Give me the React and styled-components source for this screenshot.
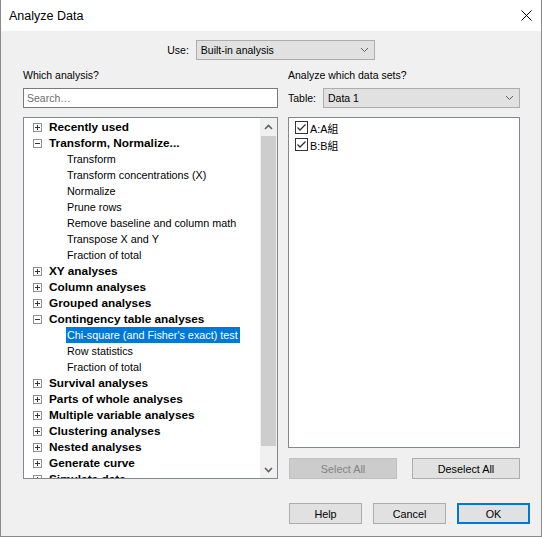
import styled, { createGlobalStyle } from "styled-components"

const GlobalStyle = createGlobalStyle`
    html, body {
        margin: 0;
        background: #ffffff;
    }
    body {
        font-family: "Liberation Sans", Arial, "Noto Sans CJK SC", sans-serif;
        color: #000000;
    }
`

const Window = styled.div`
    width: 542px;
    height: 537px;
    box-sizing: border-box;
    border: 1px solid #8a8a8a;
    border-top: none;
    display: flex;
    flex-direction: column;
    background: #f0f0f0;
`

const TitleBar = styled.div`
    height: 31px;
    flex-shrink: 0;
    background: #ffffff;
    display: flex;
    align-items: center;
    justify-content: space-between;
    padding: 0 9px 0 8px;
`

const Title = styled.span`
    font-size: 12.5px;
    color: #000;
`

const Body = styled.div`
    flex: 1;
    display: flex;
    flex-direction: column;
    padding: 9px 11px 0 22px;
`

const UseRow = styled.div`
    display: flex;
    align-items: center;
    justify-content: center;
    gap: 7px;
    padding-right: 11px;
    font-size: 10.5px;
`

const Combo = styled.div`
    width: ${p => p.width}px;
    height: 20px;
    box-sizing: border-box;
    border: 1px solid #adadad;
    background: #e1e1e1;
    display: flex;
    align-items: center;
    justify-content: space-between;
    padding: 0 5px 0 4px;
    font-size: 10.5px;
`

const Columns = styled.div`
    display: grid;
    grid-template-columns: 255px 232px;
    column-gap: 10px;
    margin-top: 8px;
`

const Column = styled.div`
    display: flex;
    flex-direction: column;
`

const Caption = styled.div`
    height: 14px;
    line-height: 14px;
    font-size: 10.5px;
`

const SearchBox = styled.div`
    margin-top: 6px;
    height: 20px;
    box-sizing: border-box;
    border: 1px solid #7a7a7a;
    background: #fff;
    display: flex;
    align-items: center;
    padding-left: 3px;
    font-size: 10.5px;
    color: #6d6d6d;
`

const TableRow = styled.div`
    margin-top: 6px;
    display: flex;
    align-items: center;
    justify-content: space-between;
    font-size: 10.5px;
`

const Tree = styled.div`
    margin-top: 9px;
    height: 362px;
    box-sizing: border-box;
    border: 1px solid #828790;
    background: #ffffff;
    display: flex;
`

const TreeItems = styled.div`
    flex: 1;
    overflow: hidden;
    padding-top: 1px;
`

const TreeRow = styled.div`
    height: 16px;
    display: flex;
    align-items: center;
    padding-left: ${p => (p.child ? 42 : 9)}px;
    white-space: nowrap;
`

const GroupLabel = styled.span`
    margin-left: 7px;
    font-size: 11.8px;
    font-weight: bold;
`

const LeafLabel = styled.span`
    height: 16px;
    line-height: 16px;
    padding: 0 2px 0 1px;
    font-size: 10.8px;
    background: ${p => (p.selected ? "#0078d7" : "transparent")};
    color: ${p => (p.selected ? "#ffffff" : "#000000")};
`

const ScrollBar = styled.div`
    width: 17px;
    background: #f0f0f0;
    display: flex;
    flex-direction: column;
    align-items: center;
`

const ScrollArrow = styled.div`
    width: 17px;
    height: 17px;
    display: flex;
    align-items: center;
    justify-content: center;
    flex-shrink: 0;
`

const Thumb = styled.div`
    width: 15px;
    height: ${p => p.size}px;
    margin-top: 1px;
    background: #cdcdcd;
`

const ScrollGap = styled.div`
    flex: 1;
`

const DataList = styled.div`
    margin-top: 9px;
    height: 331px;
    box-sizing: border-box;
    border: 1px solid #828790;
    background: #ffffff;
    padding: 1px 6px 0;
`

const CheckRow = styled.div`
    height: 17px;
    display: flex;
    align-items: center;
    gap: 2px;
    font-size: 10.8px;
`

const ListButtons = styled.div`
    margin-top: 10px;
    display: flex;
    justify-content: space-between;
    padding-left: 1px;
`

const Button = styled.div`
    width: ${p => p.width}px;
    height: 21px;
    box-sizing: border-box;
    display: flex;
    align-items: center;
    justify-content: center;
    font-size: 10.8px;
    background: ${p => (p.disabled ? "#cccccc" : "#e1e1e1")};
    border: ${p => (p.primary ? "2px solid #0078d7" : p.disabled ? "1px solid #bfbfbf" : "1px solid #adadad")};
    color: ${p => (p.disabled ? "#838383" : "#000000")};
`

const Footer = styled.div`
    margin-top: 24px;
    display: flex;
    justify-content: flex-end;
    gap: 11px;
`

const Chevron = ({ up, color = "#606060", width = 1 }) => (
    <svg width="9" height="6" viewBox="0 0 9 6">
        <polyline
            points={up ? "1,5 4.5,1.5 8,5" : "1,1 4.5,4.5 8,1"}
            fill="none"
            stroke={color}
            strokeWidth={width}
        />
    </svg>
)

const CloseIcon = () => (
    <svg width="11" height="11" viewBox="0 0 11 11">
        <path d="M0.5 0.5 L10.5 10.5 M10.5 0.5 L0.5 10.5" stroke="#000" strokeWidth="1" />
    </svg>
)

const Expander = ({ open }) => (
    <svg width="9" height="9" viewBox="0 0 9 9">
        <rect x="0.5" y="0.5" width="8" height="8" fill="#fff" stroke="#919191" />
        <path d={open ? "M2 4.5 H7" : "M2 4.5 H7 M4.5 2 V7"} stroke="#333" strokeWidth="1" />
    </svg>
)

const CheckBox = () => (
    <svg width="13" height="13" viewBox="0 0 13 13">
        <rect x="0.5" y="0.5" width="12" height="12" fill="#fff" stroke="#333" />
        <polyline points="2.5,6.5 5,9 10.5,3.5" fill="none" stroke="#333" strokeWidth="1.3" />
    </svg>
)

const analyses = [
    { label: "Recently used" },
    {
        label: "Transform, Normalize...",
        open: true,
        children: [
            "Transform",
            "Transform concentrations (X)",
            "Normalize",
            "Prune rows",
            "Remove baseline and column math",
            "Transpose X and Y",
            "Fraction of total",
        ],
    },
    { label: "XY analyses" },
    { label: "Column analyses" },
    { label: "Grouped analyses" },
    {
        label: "Contingency table analyses",
        open: true,
        children: ["Chi-square (and Fisher's exact) test", "Row statistics", "Fraction of total"],
    },
    { label: "Survival analyses" },
    { label: "Parts of whole analyses" },
    { label: "Multiple variable analyses" },
    { label: "Clustering analyses" },
    { label: "Nested analyses" },
    { label: "Generate curve" },
    { label: "Simulate data" },
]

const selected = "Chi-square (and Fisher's exact) test"

const dataSets = ["A:A組", "B:B組"]

function AnalysisTree() {
    return (
        <Tree>
            <TreeItems>
                {analyses.map(group => (
                    <div key={group.label}>
                        <TreeRow>
                            <Expander open={group.open} />
                            <GroupLabel>{group.label}</GroupLabel>
                        </TreeRow>
                        {group.open &&
                            group.children.map(item => (
                                <TreeRow child key={item}>
                                    <LeafLabel selected={item === selected}>{item}</LeafLabel>
                                </TreeRow>
                            ))}
                    </div>
                ))}
            </TreeItems>
            <ScrollBar>
                <ScrollArrow>
                    <Chevron up width={1.6} />
                </ScrollArrow>
                <Thumb size={310} />
                <ScrollGap />
                <ScrollArrow>
                    <Chevron width={1.6} />
                </ScrollArrow>
            </ScrollBar>
        </Tree>
    )
}

export default function App() {
    return (
        <>
            <GlobalStyle />
            <Window>
                <TitleBar>
                    <Title>Analyze Data</Title>
                    <CloseIcon />
                </TitleBar>
                <Body>
                    <UseRow>
                        <span>Use:</span>
                        <Combo width={179}>
                            <span>Built-in analysis</span>
                            <Chevron />
                        </Combo>
                    </UseRow>
                    <Columns>
                        <Column>
                            <Caption>Which analysis?</Caption>
                            <SearchBox>Search…</SearchBox>
                            <AnalysisTree />
                        </Column>
                        <Column>
                            <Caption>Analyze which data sets?</Caption>
                            <TableRow>
                                <span>Table:</span>
                                <Combo width={197}>
                                    <span>Data 1</span>
                                    <Chevron />
                                </Combo>
                            </TableRow>
                            <DataList>
                                {dataSets.map(name => (
                                    <CheckRow key={name}>
                                        <CheckBox />
                                        <span>{name}</span>
                                    </CheckRow>
                                ))}
                            </DataList>
                            <ListButtons>
                                <Button width={108} disabled>Select All</Button>
                                <Button width={108}>Deselect All</Button>
                            </ListButtons>
                        </Column>
                    </Columns>
                    <Footer>
                        <Button width={73}>Help</Button>
                        <Button width={73}>Cancel</Button>
                        <Button width={73} primary>OK</Button>
                    </Footer>
                </Body>
            </Window>
        </>
    )
}
